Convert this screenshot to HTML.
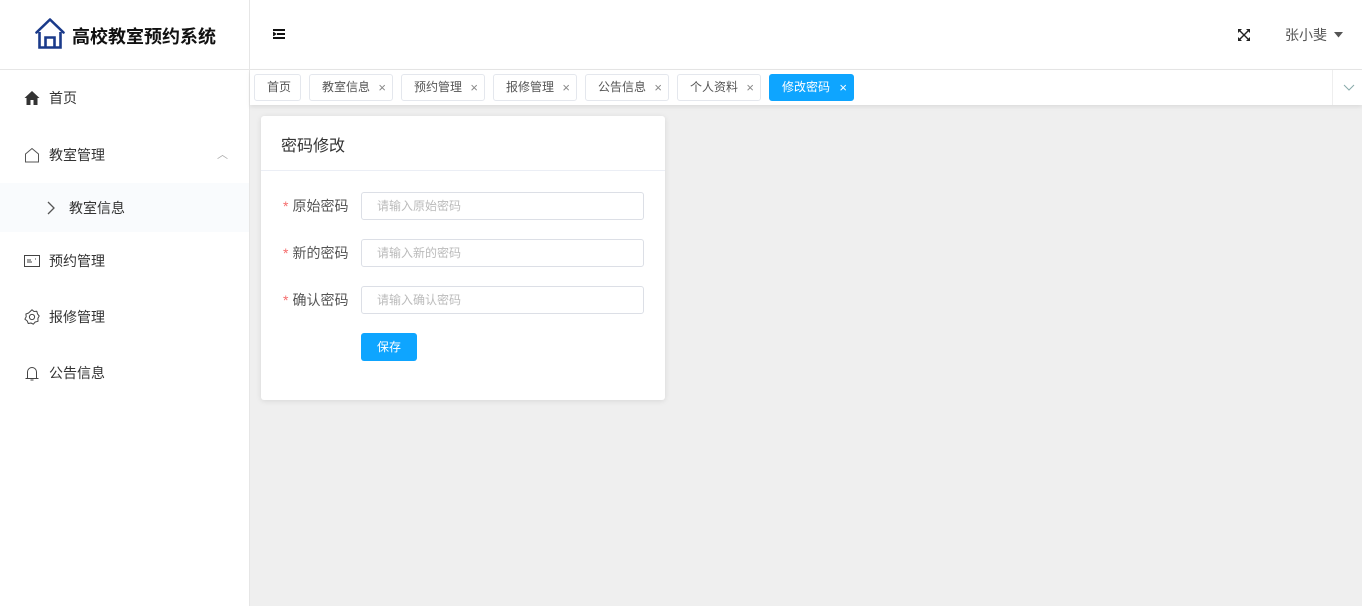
<!DOCTYPE html>
<html><head><meta charset="utf-8"><style>
*{margin:0;padding:0;box-sizing:border-box}
body{width:1362px;height:606px;overflow:hidden;font-family:"Liberation Sans","Noto Sans CJK SC",sans-serif;background:#efefef;position:relative;color:#333}
.side{position:absolute;left:0;top:0;width:250px;height:606px;background:#fff;border-right:1px solid #e6e6e6}
.logo{height:70px;border-bottom:1px solid #e6e6e6;position:relative}
.logo span{position:absolute;left:72px;top:23px;font-size:18px;font-weight:bold;color:#111;letter-spacing:0}
.mi{position:absolute;left:0;width:249px;font-size:14px;color:#333}
.mi .t{position:absolute;left:49px;top:-10px;line-height:20px}
.mi svg{position:absolute;left:24px;top:-8px}
.head{position:absolute;left:250px;top:0;right:0;height:70px;background:#fff;border-bottom:1px solid #e6e6e6}
.tags{position:absolute;left:250px;top:70px;right:0;height:35px;background:#fff;box-shadow:0 2px 4px rgba(0,0,0,.08)}
.tag{position:absolute;top:4px;height:27px;border:1px solid #e4e7ed;border-radius:3px;font-size:12px;color:#555;line-height:25px;padding-left:12px}
.tag i{font-style:normal;position:absolute;right:6px;top:0;color:#888;font-size:13px}
.tag.on{background:#0ea5ff;border-color:#0ea5ff;color:#fff}
.tag.on i{color:#fff}
.card{position:absolute;left:261px;top:116px;width:404px;height:284px;background:#fff;border-radius:3px;box-shadow:0 1px 6px rgba(0,0,0,.1)}
.ch{height:55px;border-bottom:1px solid #ebeef5;font-size:16px;color:#333;padding:16px 0 0 20px}
.row{position:absolute;left:0;font-size:14px;color:#555}
.row .l{position:absolute;left:22px;top:4px;white-space:nowrap}
.row .l b{color:#f56c6c;font-weight:normal;margin-right:4px}
.row .in{position:absolute;left:100px;top:0;width:283px;height:28px;border:1px solid #dcdfe6;border-radius:3px;font-size:12px;color:#bbb;padding-left:15px;line-height:26px}
.btn{position:absolute;left:100px;top:217px;width:56px;height:28px;background:#0ea5ff;border-radius:3px;color:#fff;font-size:12px;text-align:center;line-height:28px}
</style></head><body>
<div class="side">
 <div class="logo">
  <svg style="position:absolute;left:35px;top:18px" width="30" height="31" viewBox="0 0 30 31"><path d="M1.5 14.5 L15 1.5 L28.5 14.5" fill="none" stroke="#1a3a8a" stroke-width="2.6" stroke-linejoin="round" stroke-linecap="round"/><path d="M4.5 14 V29.5 H25.5 V14" fill="none" stroke="#1a3a8a" stroke-width="2.6"/><path d="M10.5 29.5 V19.5 H19.5 V29.5" fill="none" stroke="#1a3a8a" stroke-width="2.6"/></svg>
  <span>高校教室预约系统</span>
 </div>
 <div class="mi" style="top:98px"><svg width="16" height="16" viewBox="0 0 16 16"><path d="M8 1 L0.5 8 H2.5 V15 H6.5 V10 H9.5 V15 H13.5 V8 H15.5Z" fill="#333"/></svg><span class="t">首页</span></div>
 <div class="mi" style="top:155px"><svg width="16" height="16" viewBox="0 0 16 16"><path d="M1.5 7 L8 1.5 L14.5 7 V15 H1.5Z" fill="none" stroke="#555" stroke-width="1"/></svg><span class="t">教室管理</span><span style="position:absolute;left:217px;top:-9px;font-size:11px;color:#aaa">︿</span></div>
 <div style="position:absolute;left:0;top:183px;width:249px;height:49px;background:#f9fbfd"></div>
 <div class="mi" style="top:208px"><svg style="left:47px;top:-7px" width="8" height="14" viewBox="0 0 8 14"><path d="M1 1 L7 7 L1 13" fill="none" stroke="#555" stroke-width="1.3"/></svg><span class="t" style="left:69px">教室信息</span></div>
 <div class="mi" style="top:261px"><svg width="16" height="16" viewBox="0 0 16 16"><rect x="0.5" y="2.5" width="15" height="11" fill="none" stroke="#444"/><path d="M3 9 H8 M3 7 H7 M11 6 H12" stroke="#444"/></svg><span class="t">预约管理</span></div>
 <div class="mi" style="top:317px"><svg width="16" height="16" viewBox="0 0 16 16"><circle cx="8" cy="8" r="2.6" fill="none" stroke="#444"/><path d="M8 0.8 L10 2.5 L12.8 2.2 L13.5 4.9 L15.2 7 L13.9 9.4 L14 12.3 L11.2 13 L9.3 15.2 L7 14 L4.3 14.5 L3.2 11.9 L0.9 10.2 L2.2 7.7 L1.9 5 L4.6 4 Z" fill="none" stroke="#444" stroke-linejoin="round"/></svg><span class="t">报修管理</span></div>
 <div class="mi" style="top:373px"><svg width="16" height="16" viewBox="0 0 16 16"><path d="M3.5 13 V7 A4.5 4.5 0 0 1 12.5 7 V13 M1.5 13.5 H14.5 M6.5 15 H9.5" fill="none" stroke="#444"/></svg><span class="t">公告信息</span></div>
</div>
<div class="head">
 <svg style="position:absolute;left:23px;top:29px" width="12" height="10" viewBox="0 0 12 10"><path d="M0 1 H12 M4 5 H12 M0 9 H12 M0 3.5 L2 5 L0 6.5" stroke="#111" stroke-width="2" fill="none"/></svg>
 <svg style="position:absolute;left:988px;top:29px" width="12" height="12" viewBox="0 0 12 12"><path d="M1 1 L11 11 M11 1 L1 11" stroke="#222" stroke-width="1.4"/><path d="M0 0 H4 L0 4Z M12 0 H8 L12 4Z M0 12 H4 L0 8Z M12 12 H8 L12 8Z" fill="#222"/></svg>
 <span style="position:absolute;left:1035px;top:25px;font-size:14px;color:#555">张小斐</span>
 <svg style="position:absolute;left:1084px;top:32px" width="9" height="6" viewBox="0 0 9 6"><path d="M0 0 H9 L4.5 5.5Z" fill="#555"/></svg>
</div>
<div class="tags">
 <div class="tag" style="left:4px;width:47px">首页</div>
 <div class="tag" style="left:59px;width:84px">教室信息<i>×</i></div>
 <div class="tag" style="left:151px;width:84px">预约管理<i>×</i></div>
 <div class="tag" style="left:243px;width:84px">报修管理<i>×</i></div>
 <div class="tag" style="left:335px;width:84px">公告信息<i>×</i></div>
 <div class="tag" style="left:427px;width:84px">个人资料<i>×</i></div>
 <div class="tag on" style="left:519px;width:85px">修改密码<i>×</i></div>
 <div style="position:absolute;right:0;top:0;width:30px;height:35px;border-left:1px solid #eee;background:#fff"><svg style="position:absolute;left:10px;top:14px" width="12" height="7" viewBox="0 0 12 7"><path d="M1 1 L6 6 L11 1" fill="none" stroke="#8aa" stroke-width="1"/></svg></div>
</div>
<div class="card">
 <div class="ch">密码修改</div>
 <div class="row" style="top:76px"><span class="l"><b>*</b>原始密码</span><div class="in">请输入原始密码</div></div>
 <div class="row" style="top:123px"><span class="l"><b>*</b>新的密码</span><div class="in">请输入新的密码</div></div>
 <div class="row" style="top:170px"><span class="l"><b>*</b>确认密码</span><div class="in">请输入确认密码</div></div>
 <div class="btn">保存</div>
</div>
</body></html>
